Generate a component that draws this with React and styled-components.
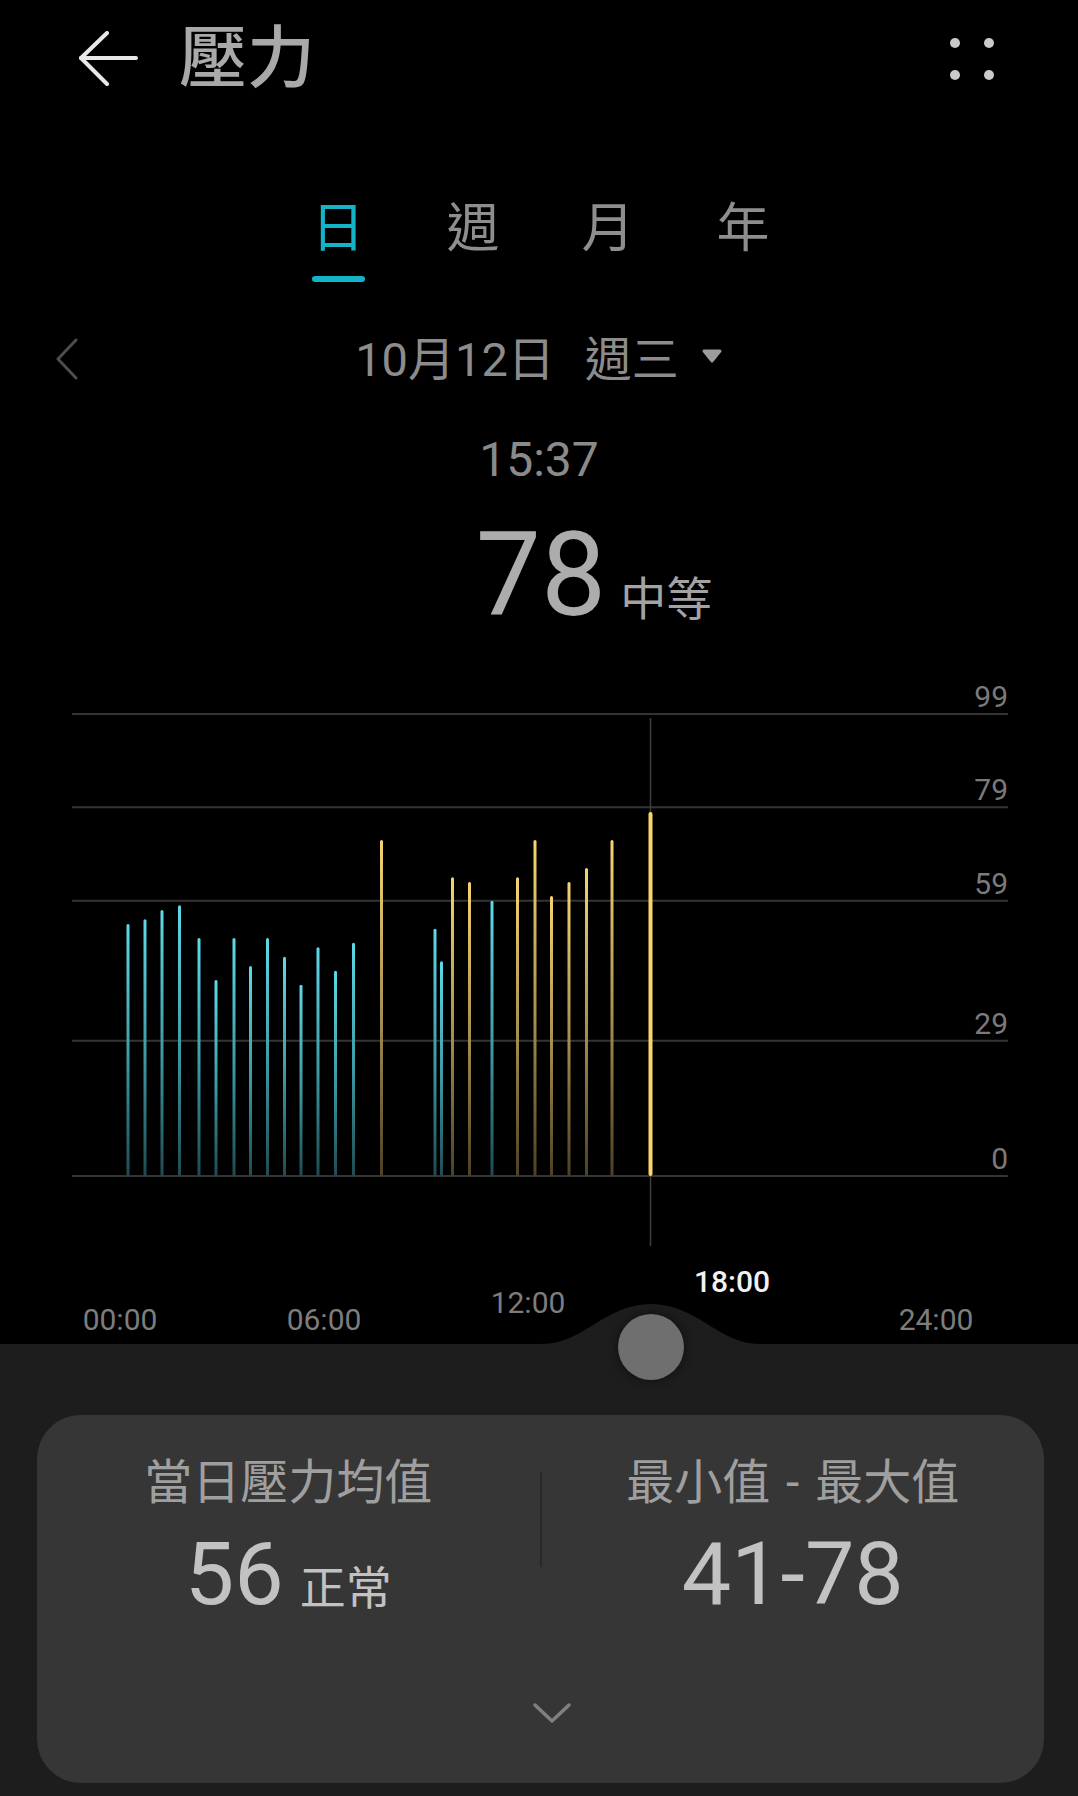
import React from "react";
import styled, { createGlobalStyle } from "styled-components";

const GlobalStyle = createGlobalStyle`
  html, body { margin: 0; padding: 0; background: #000; }
  body { font-family: Roboto, "Noto Sans CJK TC", sans-serif; -webkit-font-smoothing: antialiased; }
  * { box-sizing: border-box; }
  button { font: inherit; }
`;

const Screen = styled.div`
  width: 1078px;
  height: 1796px;
  background: #000;
  display: flex;
  flex-direction: column;
  overflow: hidden;
`;

/* ---------- header ---------- */
const Header = styled.header`
  height: 118px;
  flex: none;
  display: flex;
  align-items: center;
  padding: 0 84px 0 78px;
`;

const IconButton = styled.button`
  background: none;
  border: 0;
  padding: 0;
  display: flex;
  align-items: center;
  justify-content: center;
  color: ${(p) => p.$color || "#e8e8e8"};
  cursor: pointer;
`;

const Title = styled.h1`
  margin: 0 0 0 41px;
  flex: 1;
  font-size: 68px;
  line-height: 68px;
  font-weight: 500;
  color: #a9a9a9;
`;

const MoreGrid = styled.div`
  display: grid;
  grid-template-columns: repeat(2, 10px);
  grid-auto-rows: 10px;
  column-gap: 24px;
  row-gap: 22px;
`;

const Dot = styled.span`
  width: 10px;
  height: 10px;
  border-radius: 50%;
  background: #cacaca;
`;

/* ---------- tabs ---------- */
const Tabs = styled.nav`
  margin-top: 85px;
  display: flex;
  justify-content: center;
  gap: 82px;
  padding-left: 3px;
`;

const Tab = styled.div`
  display: flex;
  flex-direction: column;
  align-items: center;
  font-size: 53px;
  line-height: 53px;
  color: ${(p) => (p.$active ? "#13b4c7" : "#8e8e8e")};
`;

const TabIndicator = styled.span`
  margin-top: 20px;
  width: 53px;
  height: 6px;
  border-radius: 3px;
  background: ${(p) => (p.$active ? "#13b4c7" : "transparent")};
`;

/* ---------- date ---------- */
const DateRow = styled.div`
  margin-top: 37px;
  height: 80px;
  display: grid;
  grid-template-columns: 1fr auto 1fr;
  align-items: center;
`;

const PrevSlot = styled.div`
  padding-left: 55px;
`;

const DateLabel = styled.div`
  display: flex;
  align-items: center;
  font-size: 47px;
  line-height: 47px;
  color: #8c8c8c;
`;

const Weekday = styled.span`
  margin-left: 30px;
`;

const Caret = styled.svg`
  margin-left: 22px;
  margin-bottom: 6px;
`;

/* ---------- current reading ---------- */
const TimeText = styled.div`
  margin-top: 37px;
  text-align: center;
  font-size: 48px;
  line-height: 48px;
  color: #8a8a8a;
`;

const ValueRow = styled.div`
  margin-top: 33px;
  display: grid;
  grid-template-columns: 1fr auto 1fr;
  align-items: baseline;
`;

const BigValue = styled.span`
  grid-column: 2;
  font-size: 116px;
  line-height: 116px;
  color: #acacac;
  margin-left: 4px;
`;

const Level = styled.span`
  justify-self: start;
  margin-left: 14px;
  font-size: 46px;
  color: #a3a3a3;
`;

/* ---------- chart ---------- */
const ChartSvg = styled.svg`
  display: block;
  flex: none;
  margin-top: 47px;
`;

const AxisRow = styled.div`
  height: 94px;
  flex: none;
  display: grid;
  grid-template-columns: repeat(5, 204px);
  padding-left: 18px;
  align-items: end;
`;

const AxisLabel = styled.span`
  justify-self: center;
  font-size: 30px;
  line-height: 30px;
  padding-bottom: ${(p) => 9 + p.$lift}px;
  color: ${(p) => (p.$current ? "#f2f2f2" : "#7d7d7d")};
  font-weight: ${(p) => (p.$current ? 500 : 400)};
`;

/* ---------- bottom panel ---------- */
const Panel = styled.section`
  position: relative;
  flex: 1;
  background: #1d1d1d;
  padding: 71px 34px 13px 37px;
  display: flex;
  flex-direction: column;
`;

const Bump = styled.svg`
  position: absolute;
  left: 543px;
  top: -40px;
`;

const Handle = styled.div`
  position: absolute;
  left: 618px;
  top: -30px;
  width: 66px;
  height: 66px;
  border-radius: 50%;
  background: #6f6f6f;
  box-shadow: 0 0 8px 2px rgba(0, 0, 0, 0.35);
`;

const Card = styled.div`
  flex: 1;
  background: #363636;
  border-radius: 44px;
  padding-top: 44px;
  display: flex;
  flex-direction: column;
`;

const StatsGrid = styled.div`
  display: grid;
  grid-template-columns: 1fr 2px 1fr;
`;

const Stat = styled.div`
  display: flex;
  flex-direction: column;
  align-items: center;
`;

const StatTitle = styled.div`
  font-size: 48px;
  line-height: 48px;
  color: #9f9f9f;
`;

const Dash = styled.span`
  margin: 0 4px;
`;

const StatValue = styled.div`
  margin-top: 23px;
  display: flex;
  align-items: baseline;
  font-size: 88px;
  line-height: 88px;
  color: #c2c2c2;
`;

const StatUnit = styled.span`
  margin-left: 16px;
  font-size: 46px;
`;

const Divider = styled.div`
  margin-top: 13px;
  height: 95px;
  background: #292929;
`;

const ExpandButton = styled(IconButton)`
  margin-top: auto;
  margin-bottom: 59px;
  align-self: center;
  margin-left: 22px;
`;

/* ---------- data ---------- */
const GRID = [99, 79, 59, 29, 0];
const BASE = 496;
const SCALE = 4.667;
const yOf = (v) => BASE - v * SCALE;

const BARS = [
  [128, 54], [145, 55], [162, 57], [179.5, 58], [199, 51], [216, 42], [234, 51],
  [250.5, 45], [267.5, 51], [284.5, 47], [301, 41], [318, 49], [335.5, 44], [353.5, 50],
  [381.5, 72], [435, 53], [441.5, 46], [452.5, 64], [469.5, 63], [492, 59],
  [517.5, 64], [535, 72], [551.5, 60], [569, 63], [586.5, 66], [612, 72],
];
const CURRENT = { x: 650.5, v: 78 };

const AXIS = [
  { t: "00:00", lift: 0 },
  { t: "06:00", lift: 0 },
  { t: "12:00", lift: 17 },
  { t: "18:00", lift: 38, current: true },
  { t: "24:00", lift: 0 },
];

function StressChart() {
  return (
    <ChartSvg width="1078" height="570" viewBox="0 0 1078 570">
      <defs>
        <linearGradient id="calm" x1="0" y1="0" x2="0" y2="1">
          <stop offset="0" stopColor="#5fd9e7" />
          <stop offset="0.55" stopColor="#3b98a3" />
          <stop offset="1" stopColor="#1f4b51" />
        </linearGradient>
        <linearGradient id="tense" x1="0" y1="0" x2="0" y2="1">
          <stop offset="0" stopColor="#f6d56f" />
          <stop offset="0.55" stopColor="#a38b4c" />
          <stop offset="1" stopColor="#4c4024" />
        </linearGradient>
      </defs>
      {GRID.map((v) => (
        <g key={v}>
          <line x1="72" x2="1008" y1={yOf(v)} y2={yOf(v)} stroke="#343434" strokeWidth="2" />
          <text
            x="1008"
            y={yOf(v) - 7}
            textAnchor="end"
            fontSize="30"
            fontFamily="Roboto, sans-serif"
            fill="#7a7a7a"
          >
            {v}
          </text>
        </g>
      ))}
      <line x1={CURRENT.x} x2={CURRENT.x} y1="38" y2="566" stroke="#3e3e3e" strokeWidth="1.5" />
      {BARS.map(([x, v]) => (
        <rect
          key={x}
          x={x - 1.5}
          y={yOf(v)}
          width="3"
          height={v * SCALE}
          rx="1.5"
          fill={v >= 60 ? "url(#tense)" : "url(#calm)"}
        />
      ))}
      <rect
        x={CURRENT.x - 2}
        y={yOf(CURRENT.v)}
        width="4"
        height={CURRENT.v * SCALE}
        rx="2"
        fill="#f9d66c"
      />
    </ChartSvg>
  );
}

export default function App() {
  return (
    <>
      <GlobalStyle />
      <Screen>
        <Header>
          <IconButton aria-label="返回">
            <svg width="60" height="56" viewBox="0 0 60 56" fill="none" stroke="currentColor" strokeWidth="4" strokeLinecap="round" strokeLinejoin="round">
              <path d="M58 27H3" />
              <path d="M29 2L3 27L29 53" />
            </svg>
          </IconButton>
          <Title>壓力</Title>
          <MoreGrid aria-label="更多">
            <Dot /><Dot /><Dot /><Dot />
          </MoreGrid>
        </Header>

        <Tabs>
          {["日", "週", "月", "年"].map((t, i) => (
            <Tab key={t} $active={i === 0}>
              {t}
              <TabIndicator $active={i === 0} />
            </Tab>
          ))}
        </Tabs>

        <DateRow>
          <PrevSlot>
            <IconButton $color="#4d4d4d" aria-label="上一天">
              <svg width="24" height="42" viewBox="0 0 24 42" fill="none" stroke="currentColor" strokeWidth="3" strokeLinecap="round" strokeLinejoin="round">
                <path d="M21 2L3 21L21 40" />
              </svg>
            </IconButton>
          </PrevSlot>
          <DateLabel>
            <span>10月12日</span>
            <Weekday>週三</Weekday>
            <Caret width="22" height="16" viewBox="0 0 22 16">
              <path d="M3 3H19L11 13Z" fill="#9c9c9c" stroke="#9c9c9c" strokeWidth="3" strokeLinejoin="round" />
            </Caret>
          </DateLabel>
        </DateRow>

        <TimeText>15:37</TimeText>
        <ValueRow>
          <BigValue>78</BigValue>
          <Level>中等</Level>
        </ValueRow>

        <StressChart />

        <AxisRow>
          {AXIS.map((a) => (
            <AxisLabel key={a.t} $lift={a.lift} $current={a.current}>
              {a.t}
            </AxisLabel>
          ))}
        </AxisRow>

        <Panel>
          <Bump width="216" height="42" viewBox="0 0 216 42">
            <path d="M0 42V40C40 40 62 0 108 0C154 0 176 40 216 40V42Z" fill="#1d1d1d" />
          </Bump>
          <Handle />
          <Card>
            <StatsGrid>
              <Stat>
                <StatTitle>當日壓力均值</StatTitle>
                <StatValue>
                  56<StatUnit>正常</StatUnit>
                </StatValue>
              </Stat>
              <Divider />
              <Stat>
                <StatTitle>
                  最小值 <Dash>-</Dash> 最大值
                </StatTitle>
                <StatValue>41-78</StatValue>
              </Stat>
            </StatsGrid>
            <ExpandButton $color="#808080" aria-label="展開">
              <svg width="40" height="22" viewBox="0 0 40 22" fill="none" stroke="currentColor" strokeWidth="3.5" strokeLinecap="round" strokeLinejoin="round">
                <path d="M3 3L20 19L37 3" />
              </svg>
            </ExpandButton>
          </Card>
        </Panel>
      </Screen>
    </>
  );
}
